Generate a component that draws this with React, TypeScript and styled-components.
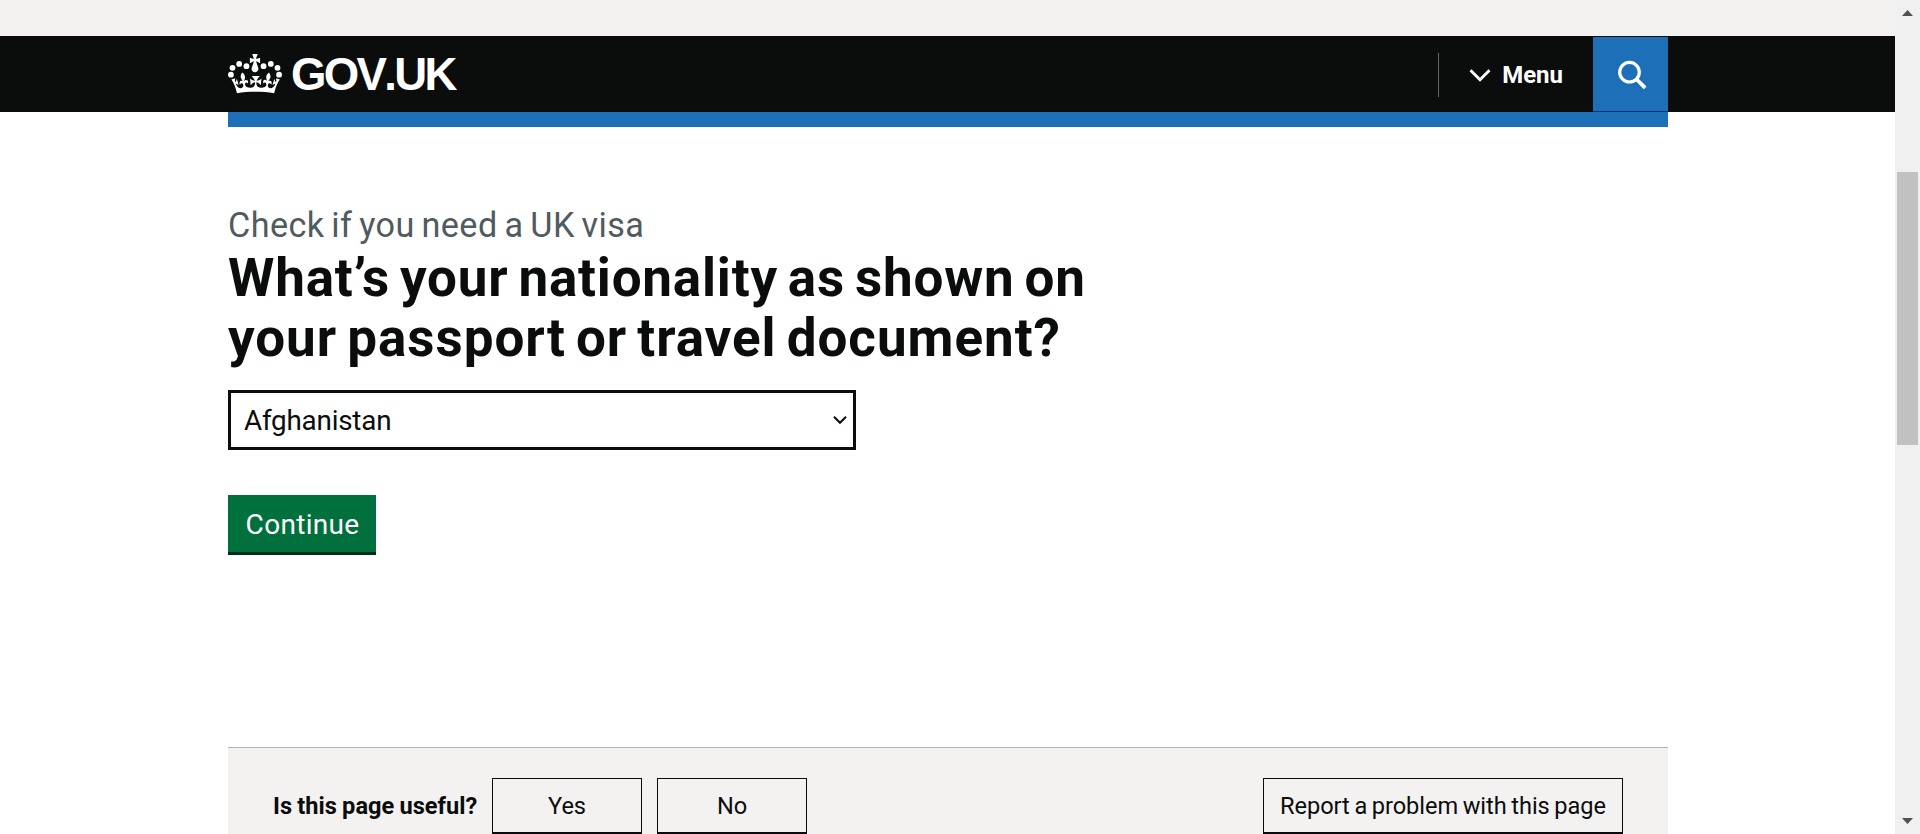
import React from "react";
import styled, { createGlobalStyle } from "styled-components";

const ink = "#0b0c0c";
const blue = "#1d70b8";
const paper = "#f3f2f1";

const GlobalStyle = createGlobalStyle`
  *, *::before, *::after { box-sizing: border-box; }
  body { margin: 0; overflow: hidden; background: #fff; }
`;

const Screen = styled.div`
  display: flex;
  height: 834px;
  overflow: hidden;
  color: ${ink};
  font-family: Roboto, "Liberation Sans", sans-serif;
`;

const Page = styled.div`
  flex: 1;
  height: 834px;
  overflow: hidden;
`;

const Container = styled.div`
  width: 1440px;
  margin-left: 228px;
`;

const CookieBand = styled.div`
  height: 36px;
  background: ${paper};
`;

const Header = styled.header`
  height: 76px;
  background: ${ink};
  color: #fff;
`;

const HeaderRow = styled(Container)`
  display: flex;
  align-items: stretch;
  justify-content: space-between;
  height: 76px;
`;

const Logo = styled.a`
  display: flex;
  align-items: flex-start;
  gap: 9px;
  padding-top: 12px;
`;

const LogoText = styled.span`
  font: 700 45.6px/50px "Liberation Sans", Arial, sans-serif;
  font-kerning: none;
  letter-spacing: -2.7px;
  padding-top: 2px;
`;

const HeaderNav = styled.div`
  display: flex;
  padding-top: 1px;
`;

const MenuButton = styled.button`
  display: flex;
  align-items: center;
  height: 44px;
  margin-top: 16px;
  padding: 0 30px;
  border: 0;
  border-left: 1px solid #626a6e;
  background: none;
  color: #fff;
  font: 700 24px/44px Roboto, sans-serif;
`;

const Chevron = styled.svg`
  width: 22px;
  height: 15px;
  margin-right: 11px;
`;

const SearchButton = styled.button`
  width: 75px;
  height: 75px;
  padding: 2px 0 0 24px;
  border: 0;
  border-bottom: 1px solid #003078;
  background: ${blue};
  display: flex;
  align-items: center;
`;

const BlueBar = styled(Container)`
  height: 15px;
  background: ${blue};
`;

const Main = styled(Container).attrs({ as: "main" })`
  height: 620px;
  padding-top: 76px;
`;

const Caption = styled.span`
  display: block;
  height: 45px;
  color: #505a5f;
  font-size: 34.2px;
  line-height: 45px;
  letter-spacing: 0.4px;
  word-spacing: -2px;
`;

const Title = styled.h1`
  margin: 0 0 22px;
  height: 120px;
  font-size: 53px;
  font-weight: 700;
  line-height: 60px;
`;

const TitleLine = styled.span<{ $spacing: number }>`
  display: block;
  letter-spacing: ${(p) => p.$spacing}px;
  word-spacing: -4px;
`;

const SelectBox = styled.div`
  display: flex;
  align-items: center;
  justify-content: space-between;
  width: 628px;
  height: 60px;
  padding: 0 6px 0 13px;
  border: 3px solid ${ink};
  background: #fff;
  font-size: 27.8px;
  letter-spacing: -0.2px;
`;

const ContinueButton = styled.button`
  display: block;
  width: 148px;
  height: 60px;
  margin-top: 45px;
  padding: 2px 0 0 1px;
  border: 0;
  border-bottom: 3px solid #002d18;
  background: #00703c;
  color: #fff;
  font: 400 28px/55px Roboto, sans-serif;
  letter-spacing: 0.3px;
`;

const Feedback = styled(Container)`
  display: flex;
  align-items: flex-start;
  height: 120px;
  padding: 30px 45px 0;
  border-top: 1px solid #b1b4b6;
  background: ${paper};
`;

const Question = styled.h2`
  width: 219px;
  margin: 0;
  font-size: 23.6px;
  font-weight: 700;
  line-height: 56px;
  white-space: nowrap;
  word-spacing: -0.6px;
`;

const FeedbackButton = styled.button<{ $width: number; $end?: boolean }>`
  width: ${(p) => p.$width}px;
  height: 56px;
  margin: 0 ${(p) => (p.$end ? 0 : 15)}px 0 ${(p) => (p.$end ? "auto" : 0)};
  padding: 0;
  border: 1px solid ${ink};
  border-bottom-width: 2px;
  background: ${paper};
  color: ${ink};
  font: 400 23.6px/52px Roboto, sans-serif;
  letter-spacing: -0.05px;
  word-spacing: -1.2px;
  white-space: nowrap;
`;

const ScrollTrack = styled.div`
  display: flex;
  flex-direction: column;
  align-items: center;
  width: 25px;
  height: 834px;
  padding-right: 1px;
  background: #f0f0f0;
`;

const ScrollThumb = styled.div`
  width: 21px;
  height: 273px;
  margin: 156px 0 373px;
  background: #c1c1c1;
`;

const ScrollArrow = styled.svg`
  display: block;
  flex: none;
  width: 11px;
  height: 6px;
`;

const ArrowTop = styled(ScrollArrow)`
  margin-top: 10px;
`;

const pearls: [number, number][] = [
  [1.95, 17.8],
  [3, 13.2],
  [7.45, 10.6],
  [12.3, 12.1],
];

function Crown() {
  return (
    <svg width="54" height="48" viewBox="0 0 36 32" fill="#fff" aria-hidden="true">
      {pearls.map(([x, y]) => (
        <React.Fragment key={x}>
          <circle cx={x} cy={y} r="1.93" />
          <circle cx={36 - x} cy={y} r="1.93" />
        </React.Fragment>
      ))}
      <path d="M19 8.8l2.4 1.3V6.5l-2.4.8c-.1-.1-.1-.2-.2-.3s1-3 1-3h-3.6s1 2.9 1 3c-.1.1-.2.2-.2.3l-2.4-.8v3.6L17 8.8c.1.1.2.2.2.3l-1.4 4.2c-.1.2-.1.4-.1.6 0 1.1.8 2 1.9 2.2h.8c1-.2 1.9-1.1 1.9-2.2 0-.2 0-.4-.1-.6l-1.4-4.2c0-.1.1-.2.2-.3z" />
      <path d="M18 29.2c4.6 0 8.9.3 12.8.9 1.1-4.6 2.4-7.2 3.8-9.1l-2.6-.9c.3 1.3.3 1.9 0 2.8-.4-.4-.8-1.2-1.1-2.4l-1.2 4.2c.8-.5 1.4-.9 2-.9-1.2 2.6-2.7 3.2-3.6 3-1.2-.2-1.7-1.3-1.5-2.2.3-1.3 1.6-1.6 2.2-.1 1.2-2.4-.8-3.1-2.1-2.4 1.9-1.9 2.2-3.6.6-5.7-2.2 1.7-2.2 3.3-1.2 5.6-1.3-1.5-3.3-.7-2.5 1.7.9-1.4 2.1-.5 2 .8-.2 1.2-1.7 2.1-3.7 2-2.8-.2-3-2.2-3-3.7.7-.1 1.9.5 3 2l.4-4.4c-1.1 1.1-2.1 1.4-3.2 1.4.4-1.2 2.1-3.1 2.1-3.1h-5.4s1.8 1.9 2.1 3.1c-1.1 0-2.1-.2-3.2-1.4l.4 4.4c1.1-1.5 2.3-2.1 3-2-.1 1.6-.2 3.5-3 3.7-1.9.1-3.5-.8-3.7-2-.2-1.3 1-2.2 1.9-.8.7-2.4-1.3-3.1-2.6-1.7 1-2.3 1-4-1.2-5.6-1.6 2.1-1.3 3.8.6 5.7-1.3-.7-3.2 0-2.1 2.4.6-1.5 1.9-1.1 2.2.1.2.9-.4 1.9-1.5 2.2-1 .2-2.5-.5-3.6-3 .6 0 1.2.4 2 .9l-1.2-4.2c-.3 1.1-.7 1.9-1.1 2.4-.3-.8-.2-1.4 0-2.8l-2.6.9c1.4 1.9 2.7 4.5 3.8 9.1 3.9-.6 8.2-.9 12.8-.9z" />
    </svg>
  );
}

export default function App() {
  return (
    <Screen>
      <GlobalStyle />
      <Page>
        <CookieBand />
        <Header>
          <HeaderRow>
            <Logo aria-label="GOV.UK">
              <Crown />
              <LogoText>GOV.UK</LogoText>
            </Logo>
            <HeaderNav>
              <MenuButton>
                <Chevron viewBox="0 0 22 15" fill="none" stroke="#fff" strokeWidth="3">
                  <path d="M1.5 2.2L11 11.7l9.5-9.5" />
                </Chevron>
                Menu
              </MenuButton>
              <SearchButton aria-label="Search">
                <svg width="32" height="32" viewBox="0 0 32 32" fill="none" stroke="#fff" strokeWidth="3.2">
                  <circle cx="12.5" cy="13.2" r="9.8" />
                  <path d="M19.3 20l8.9 8.9" strokeWidth="3.8" />
                </svg>
              </SearchButton>
            </HeaderNav>
          </HeaderRow>
        </Header>
        <BlueBar />
        <Main>
          <Caption>Check if you need a UK visa</Caption>
          <Title>
            <TitleLine $spacing={0.8}>What’s your nationality as shown on</TitleLine>
            <TitleLine $spacing={0.95}>your passport or travel document?</TitleLine>
          </Title>
          <SelectBox>
            Afghanistan
            <svg width="14" height="10" viewBox="0 0 14 10" fill="none" stroke={ink} strokeWidth="2">
              <path d="M1 1.8l6 6 6-6" />
            </svg>
          </SelectBox>
          <ContinueButton>Continue</ContinueButton>
        </Main>
        <Feedback>
          <Question>Is this page useful?</Question>
          <FeedbackButton $width={150}>Yes</FeedbackButton>
          <FeedbackButton $width={150}>No</FeedbackButton>
          <FeedbackButton $width={360} $end>
            Report a problem with this page
          </FeedbackButton>
        </Feedback>
      </Page>
      <ScrollTrack>
        <ArrowTop viewBox="0 0 11 6" fill="#505050">
          <path d="M0 6L5.5 0 11 6z" />
        </ArrowTop>
        <ScrollThumb />
        <ScrollArrow viewBox="0 0 11 6" fill="#505050">
          <path d="M0 0h11L5.5 6z" />
        </ScrollArrow>
      </ScrollTrack>
    </Screen>
  );
}
